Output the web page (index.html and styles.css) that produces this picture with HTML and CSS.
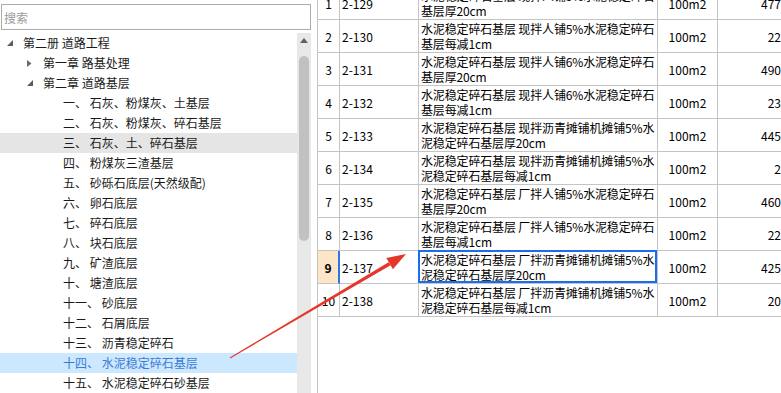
FILE: index.html
```html
<!DOCTYPE html>
<html lang="zh-CN">
<head>
  <meta charset="UTF-8">
  <meta name="viewport" content="width=device-width, initial-scale=1">
  <title>定额库 - 道路基层</title>
  <link rel="stylesheet" href="styles.css">
</head>
<body>
  <div class="main">
    <aside class="side">
      <div class="search">
        <input type="text" placeholder="搜索">
      </div>
      <div class="tree-wrap">
        <div class="tree">
          <div class="node lv0"><span class="tog"><svg width="6" height="6"><polygon points="6,0 6,6 0,6" fill="#5c5c5c"/></svg></span>第二册 道路工程</div>
          <div class="node lv1"><span class="tog"><svg width="5" height="7"><polygon points="0,0 4.5,3.5 0,7" fill="#6a6a6a"/></svg></span>第一章 路基处理</div>
          <div class="node lv1"><span class="tog"><svg width="6" height="6"><polygon points="6,0 6,6 0,6" fill="#5c5c5c"/></svg></span>第二章 道路基层</div>
          <div class="node lv2">一、 石灰、粉煤灰、土基层</div>
          <div class="node lv2">二、 石灰、粉煤灰、碎石基层</div>
          <div class="node lv2 hover">三、 石灰、土、碎石基层</div>
          <div class="node lv2">四、 粉煤灰三渣基层</div>
          <div class="node lv2">五、 砂砾石底层(天然级配)</div>
          <div class="node lv2">六、 卵石底层</div>
          <div class="node lv2">七、 碎石底层</div>
          <div class="node lv2">八、 块石底层</div>
          <div class="node lv2">九、 矿渣底层</div>
          <div class="node lv2">十、 塘渣底层</div>
          <div class="node lv2">十一、 砂底层</div>
          <div class="node lv2">十二、 石屑底层</div>
          <div class="node lv2">十三、 沥青稳定碎石</div>
          <div class="node lv2 selected">十四、 水泥稳定碎石基层</div>
          <div class="node lv2">十五、 水泥稳定碎石砂基层</div>
        </div>
        <div class="sbar">
          <div class="sbar-up"><svg width="8" height="5"><polygon points="4,0 8,5 0,5" fill="#616161"/></svg></div>
          <div class="sbar-thumb"></div>
        </div>
      </div>
    </aside>

    <section class="grid-pane">
      <div class="grid">
        <div class="row">
          <div class="cell num">1</div>
          <div class="cell code">2-129</div>
          <div class="cell desc">水泥稳定碎石基层 现拌人铺5%水泥稳定碎石<br>基层厚20cm</div>
          <div class="cell unit">100m2</div>
          <div class="cell qty">477</div>
        </div>
        <div class="row">
          <div class="cell num">2</div>
          <div class="cell code">2-130</div>
          <div class="cell desc">水泥稳定碎石基层 现拌人铺5%水泥稳定碎石<br>基层每减1cm</div>
          <div class="cell unit">100m2</div>
          <div class="cell qty">22</div>
        </div>
        <div class="row">
          <div class="cell num">3</div>
          <div class="cell code">2-131</div>
          <div class="cell desc">水泥稳定碎石基层 现拌人铺6%水泥稳定碎石<br>基层厚20cm</div>
          <div class="cell unit">100m2</div>
          <div class="cell qty">490</div>
        </div>
        <div class="row">
          <div class="cell num">4</div>
          <div class="cell code">2-132</div>
          <div class="cell desc">水泥稳定碎石基层 现拌人铺6%水泥稳定碎石<br>基层每减1cm</div>
          <div class="cell unit">100m2</div>
          <div class="cell qty">23</div>
        </div>
        <div class="row">
          <div class="cell num">5</div>
          <div class="cell code">2-133</div>
          <div class="cell desc">水泥稳定碎石基层 现拌沥青摊铺机摊铺5%水<br>泥稳定碎石基层厚20cm</div>
          <div class="cell unit">100m2</div>
          <div class="cell qty">445</div>
        </div>
        <div class="row">
          <div class="cell num">6</div>
          <div class="cell code">2-134</div>
          <div class="cell desc">水泥稳定碎石基层 现拌沥青摊铺机摊铺5%水<br>泥稳定碎石基层每减1cm</div>
          <div class="cell unit">100m2</div>
          <div class="cell qty">2</div>
        </div>
        <div class="row">
          <div class="cell num">7</div>
          <div class="cell code">2-135</div>
          <div class="cell desc">水泥稳定碎石基层 厂拌人铺5%水泥稳定碎石<br>基层厚20cm</div>
          <div class="cell unit">100m2</div>
          <div class="cell qty">460</div>
        </div>
        <div class="row">
          <div class="cell num">8</div>
          <div class="cell code">2-136</div>
          <div class="cell desc">水泥稳定碎石基层 厂拌人铺5%水泥稳定碎石<br>基层每减1cm</div>
          <div class="cell unit">100m2</div>
          <div class="cell qty">22</div>
        </div>
        <div class="row current">
          <div class="cell num">9</div>
          <div class="cell code">2-137</div>
          <div class="cell desc focus">水泥稳定碎石基层 厂拌沥青摊铺机摊铺5%水<br>泥稳定碎石基层厚20cm</div>
          <div class="cell unit">100m2</div>
          <div class="cell qty">425</div>
        </div>
        <div class="row">
          <div class="cell num">10</div>
          <div class="cell code">2-138</div>
          <div class="cell desc">水泥稳定碎石基层 厂拌沥青摊铺机摊铺5%水<br>泥稳定碎石基层每减1cm</div>
          <div class="cell unit">100m2</div>
          <div class="cell qty">20</div>
        </div>
      </div>
    </section>
  </div>

  <svg class="arrow" width="781" height="393">
    <polygon points="230.2,358.4 229.8,357.6 388.6,262.2 390.6,265.2" fill="#e5362b"/>
    <polygon points="406,254 392.9,269.3 386.3,258.1" fill="#e5362b"/>
  </svg>
</body>
</html>
```

FILE: styles.css
```css
* {
  box-sizing: border-box;
  margin: 0;
  padding: 0;
}

body {
  position: relative;
  width: 781px;
  height: 393px;
  overflow: hidden;
  font-family: "Noto Sans CJK SC", "Noto Sans", sans-serif;
  font-size: 12px;
  color: #1a1a1a;
  background: #ffffff;
}

.main {
  display: flex;
  height: 393px;
}

.side {
  width: 311px;
  display: flex;
  flex-direction: column;
}

.search {
  padding: 4px 0 3px 1px;
}

.search input {
  display: block;
  width: 310px;
  height: 26px;
  border: 1px solid #ababab;
  padding: 0 2px;
  font-family: inherit;
  font-size: 12px;
  color: #333;
  outline: none;
}

.search input::placeholder {
  color: #9a9a9a;
}

.tree-wrap {
  flex: 1;
  display: flex;
  overflow: hidden;
}

.tree {
  flex: 1;
}

.node {
  height: 20px;
  line-height: 20px;
  white-space: nowrap;
  display: flex;
  align-items: center;
}

.node.lv0 {
  padding-left: 7px;
}

.node.lv1 {
  padding-left: 27px;
}

.node.lv2 {
  padding-left: 63px;
}

.tog {
  width: 16px;
  height: 20px;
  display: flex;
  align-items: center;
}

.node.hover {
  background: #e5e5e5;
}

.node.selected {
  background: #cce8ff;
  color: #3b7bd4;
}

.sbar {
  width: 14px;
  background: #e8e8e8;
  padding: 0 2px;
}

.sbar-up {
  height: 10px;
  display: flex;
  justify-content: center;
  align-items: flex-end;
}

.sbar-thumb {
  margin-top: 13px;
  height: 185px;
  background: #c1c1c1;
  border-radius: 5px;
}

.grid-pane {
  flex: 1;
  margin-left: 6px;
  border-left: 1px solid #c4c4c4;
  overflow: hidden;
}

.grid {
  margin-top: -13px;
  color: #000;
}

.row {
  display: grid;
  grid-template-columns: 22px 79px 239px 60px 64px;
  height: 33px;
}

.cell {
  border-right: 1px solid #c4c4c4;
  border-bottom: 1px solid #c4c4c4;
  display: flex;
  align-items: center;
  white-space: nowrap;
  overflow: hidden;
}

.cell.num {
  justify-content: center;
}

.cell.code {
  padding-left: 2px;
}

.cell.desc {
  display: block;
  padding: 1px 0 0 2px;
  line-height: 15px;
  letter-spacing: -0.15px;
  overflow: visible;
  position: relative;
}

.cell.unit {
  justify-content: center;
}

.cell.qty {
  justify-content: flex-end;
  padding-right: 1px;
  border-right: none;
}

.row.current .num {
  background: #fde5c8;
  font-weight: bold;
  border-right: 2px solid #2a78e4;
}

.cell.focus::after {
  content: "";
  position: absolute;
  top: -1px;
  left: -1px;
  right: 0;
  bottom: 0;
  border: 2px solid #1a6cf0;
}

.arrow {
  position: absolute;
  top: 0;
  left: 0;
  pointer-events: none;
}
```
